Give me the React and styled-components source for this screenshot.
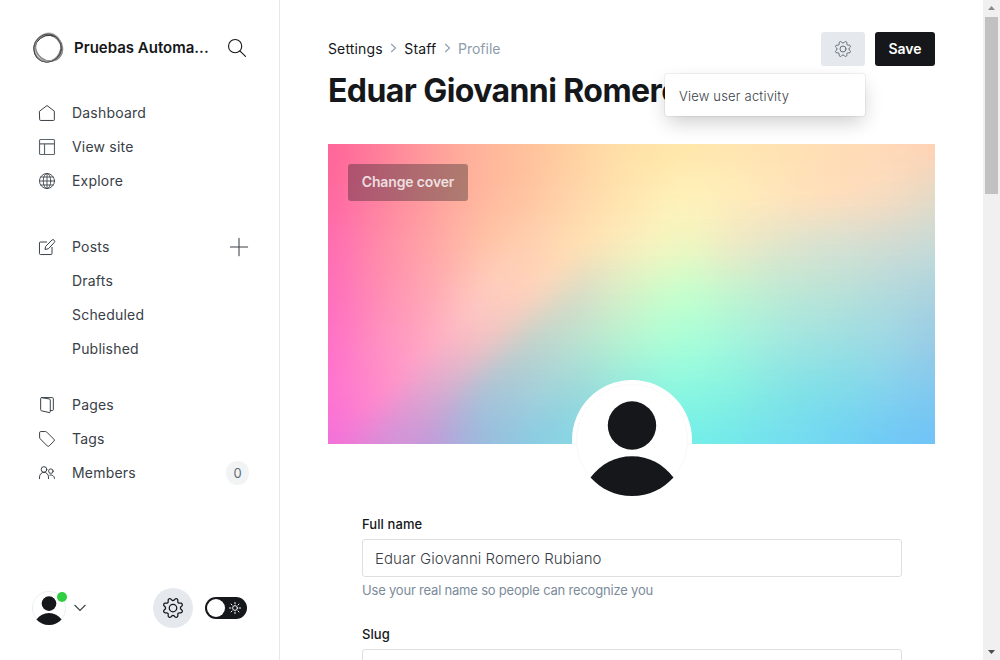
import React from "react";
import styled, { createGlobalStyle, css } from "styled-components";

const ink = "#15171a";
const slate = "#394047";

const Global = createGlobalStyle`
  * { box-sizing: border-box; }
  html, body { margin: 0; height: 660px; overflow: hidden; background: #fff; }
  body { font-family: Inter, "Liberation Sans", sans-serif; color: ${ink}; }
  #root { height: 660px; }
  button, input { font-family: inherit; }
`;

const Shell = styled.div`
  display: flex;
  width: 1000px;
  height: 660px;
  overflow: hidden;
`;

const Sidebar = styled.nav`
  flex: none;
  width: 280px;
  display: flex;
  flex-direction: column;
  border-right: 1px solid #e5e7ea;
`;

const SiteHead = styled.header`
  height: 96px;
  padding: 0 33px 0 32px;
  display: flex;
  align-items: center;
`;

const SiteName = styled.div`
  flex: 1;
  margin-left: 10px;
  font-size: 15px;
  font-weight: 600;
  line-height: 20px;
  white-space: nowrap;
`;

const NavGroup = styled.ul`
  list-style: none;
  margin: 0 0 ${(p) => p.$gap}px;
  padding: 0 31px 0 39px;
`;

const NavItem = styled.li`
  display: flex;
  align-items: center;
  height: 34px;
  color: ${slate};
  font-size: 14px;
  font-weight: 370;
  letter-spacing: 0.2px;
  padding-left: ${(p) => (p.$nested ? "33px" : "0")};
  > svg:first-child { margin-right: 17px; }
  > span { flex: 1; padding-bottom: 2px; }
`;

const Count = styled.b`
  width: 23px;
  height: 24px;
  margin-right: -1px;
  padding-bottom: 1px;
  border-radius: 12px;
  background: #f1f3f4;
  display: grid;
  place-items: center;
  font-size: 13px;
  font-weight: 400;
  letter-spacing: 0;
  color: #626d79;
`;

const SideFoot = styled.footer`
  margin-top: auto;
  height: 104px;
  padding: 0 32px;
  display: flex;
  align-items: center;
`;

const UserAvatar = styled.div`
  position: relative;
  width: 34px;
  height: 34px;
  margin-right: 8px;
  svg { display: block; }
`;

const OnlineDot = styled.i`
  position: absolute;
  top: 1px;
  right: -1px;
  width: 10px;
  height: 10px;
  border-radius: 50%;
  background: #30cf43;
`;

const RoundButton = styled.button`
  width: 40px;
  height: 40px;
  margin: 0 12px 0 auto;
  padding: 0;
  border: 0;
  border-radius: 50%;
  background: #e5e9ed;
  display: grid;
  place-items: center;
`;

const Toggle = styled.div`
  width: 42px;
  height: 22px;
  border-radius: 11px;
  background: ${ink};
  display: flex;
  align-items: center;
  justify-content: space-between;
  padding: 0 6px 0 2px;
`;

const Knob = styled.i`
  width: 18px;
  height: 18px;
  border-radius: 50%;
  background: #fff;
`;

const Main = styled.main`
  flex: 1;
  min-width: 0;
  padding: 32px 48px 0;
`;

const PageHead = styled.header`
  display: flex;
  justify-content: space-between;
  align-items: flex-start;
  height: 112px;
`;

const Crumbs = styled.div`
  display: flex;
  align-items: center;
  height: 18px;
  margin-top: 7px;
  gap: 7.3px;
  font-size: 14px;
  letter-spacing: 0.14px;
  color: ${ink};
`;

const Current = styled.span`
  letter-spacing: 0;
  color: #8e9cac;
`;

const Title = styled.h1`
  margin: 12px 0 0;
  max-width: 400px;
  font-size: 32px;
  line-height: 43px;
  font-weight: 700;
  letter-spacing: -0.58px;
  white-space: nowrap;
`;

const Actions = styled.div`
  position: relative;
  display: flex;
  gap: 10px;
`;

const Button = styled.button`
  height: 34px;
  border: 0;
  border-radius: 3px;
  padding: 0;
  display: grid;
  place-items: center;
  font-size: 14px;
  font-weight: 600;
  ${(p) =>
    p.$primary
      ? css`width: 60px; padding-bottom: 1px; background: ${ink}; color: #fff;`
      : css`width: 44px; background: #e5e9ed; color: #626d79;`}
`;

const Menu = styled.div`
  position: absolute;
  top: 42px;
  right: 70px;
  width: 200px;
  height: 42px;
  padding: 1px 14px 0;
  display: flex;
  align-items: center;
  border-radius: 3px;
  background: #fff;
  box-shadow: 0 0 0 1px rgba(0, 0, 0, 0.05), 0 8px 20px -2px rgba(0, 0, 0, 0.2);
  font-size: 13px;
  font-weight: 360;
  letter-spacing: 0.2px;
  color: ${slate};
`;

const Cover = styled.section`
  position: relative;
  height: 300px;
  display: flex;
  flex-direction: column;
  align-items: flex-start;
  padding: 20px;
  isolation: isolate;
`;

const Band = styled.div`
  position: absolute;
  inset: 0;
  z-index: -1;
  background: linear-gradient(90deg, ${(p) => p.$stops});
  ${(p) =>
    p.$from !== null &&
    css`mask-image: linear-gradient(180deg, transparent ${p.$from}px, #000 ${p.$to}px);`}
`;

const CoverButton = styled.button`
  flex: none;
  width: 120px;
  height: 37px;
  padding: 0 0 2px;
  border: 0;
  border-radius: 3px;
  background: rgba(21, 23, 26, 0.34);
  color: rgba(255, 255, 255, 0.8);
  font-size: 14px;
  font-weight: 600;
  letter-spacing: -0.15px;
`;

const Portrait = styled.div`
  flex: none;
  width: 120px;
  height: 120px;
  margin: 179px auto 0;
  border-radius: 50%;
  background: #fff;
  padding: 4px;
  svg { display: block; }
`;

const Form = styled.form`
  padding: 70px 33px 0 34px;
`;

const Field = styled.div`
  height: 110px;
`;

const Label = styled.label`
  display: block;
  height: 25px;
  line-height: 20px;
  font-size: 13px;
  font-weight: 450;
  letter-spacing: 0.1px;
`;

const Input = styled.input`
  display: block;
  width: 100%;
  height: 38px;
  border: 1px solid #dddfe1;
  border-radius: 3px;
  padding: 0 12px;
  outline: 0;
  font-size: 15px;
  font-weight: 360;
  letter-spacing: 0.06px;
  color: ${slate};
  background: #fff;
`;

const Hint = styled.p`
  margin: 4px 0 0;
  line-height: 19px;
  font-size: 13px;
  letter-spacing: -0.2px;
  color: #7c8b9a;
`;

const Scrollbar = styled.aside`
  flex: none;
  width: 17px;
  background: #f0f0f0;
  display: flex;
  flex-direction: column;
  align-items: center;
  justify-content: space-between;
`;

const ScrollTop = styled.div`
  display: flex;
  flex-direction: column;
`;

const Thumb = styled.div`
  width: 13px;
  height: 177px;
  margin: 0 auto;
  background: #c1c1c1;
`;

const Icon = ({ size = 16, sw = 1.5, color = slate, box = 24, children }) => (
  <svg width={size} height={size} viewBox={`0 0 ${box} ${box}`} fill="none" stroke={color} strokeWidth={sw} strokeLinecap="round" strokeLinejoin="round" overflow="visible">
    {children}
  </svg>
);

const Gear = ({ size, sw, color }) => (
  <Icon size={size} sw={sw} color={color}>
    <path d="M10.546 2.438a1.957 1.957 0 0 0 2.908 0L14.4 1.4a1.959 1.959 0 0 1 3.41 1.413l-.071 1.4a1.958 1.958 0 0 0 2.051 2.054l1.4-.071a1.959 1.959 0 0 1 1.41 3.41l-1.042.94a1.96 1.96 0 0 0 0 2.909l1.042.94a1.959 1.959 0 0 1-1.413 3.41l-1.4-.071a1.958 1.958 0 0 0-2.056 2.056l.071 1.4A1.959 1.959 0 0 1 14.4 22.6l-.941-1.041a1.959 1.959 0 0 0-2.908 0L9.606 22.6A1.959 1.959 0 0 1 6.2 21.192l.072-1.4a1.958 1.958 0 0 0-2.056-2.056l-1.4.071A1.958 1.958 0 0 1 1.4 14.4l1.041-.94a1.96 1.96 0 0 0 0-2.909L1.4 9.606A1.958 1.958 0 0 1 2.809 6.2l1.4.071a1.958 1.958 0 0 0 2.058-2.06L6.2 2.81A1.959 1.959 0 0 1 9.606 1.4z" />
    <circle cx="12" cy="12" r="4.5" />
  </Icon>
);

const Logo = () => (
  <svg width="32" height="32" viewBox="0 0 32 32" fill="none">
    <ellipse cx="15.6" cy="16.4" rx="13.6" ry="13.3" stroke="#555" strokeWidth="1.5" />
    <ellipse cx="16.7" cy="15.3" rx="14" ry="12.6" stroke="#8a8a8a" strokeWidth="1.6" transform="rotate(38 16 16)" />
    <ellipse cx="15.7" cy="16.4" rx="14.4" ry="12.6" stroke="#333" strokeWidth=".9" transform="rotate(-38 16 16)" />
    <ellipse cx="16.5" cy="15.5" rx="14.3" ry="12.9" stroke="#aaa" strokeWidth="1.4" transform="rotate(-65 16 16)" />
    <ellipse cx="15.6" cy="16.3" rx="13.4" ry="14.3" stroke="#444" strokeWidth=".8" transform="rotate(25 16 16)" />
  </svg>
);

const Person = ({ size }) => (
  <svg width={size} height={size} viewBox="0 0 112 112">
    <circle cx="56" cy="56" r={size < 50 ? 54.5 : 55.5} fill="#fff" stroke={size < 50 ? "#e9ebed" : "#f5f5f6"} strokeWidth={size < 50 ? 3 : 0.7} />
    <circle cx="56" cy="41.5" r="24.2" fill={ink} />
    <path d="M14.5 93.5C25 80 39 72.3 56 72.3S87 80 97.5 93.5C87 105 73 112 56 112S25 105 14.5 93.5z" fill={ink} />
  </svg>
);

const icons = {
  home: <Icon><path d="M1 9.2 12 .8l11 8.4V22a1.2 1.2 0 0 1-1.2 1.2H2.2A1.2 1.2 0 0 1 1 22z" /></Icon>,
  site: <Icon color="#5c636b" sw={1.7}><rect x=".8" y=".8" width="22.4" height="22.4" rx="1.6" /><path d="M.8 7.3h22.4M8.3 7.3v16" /></Icon>,
  globe: <Icon sw={1.3}><circle cx="12" cy="12" r="11.3" /><ellipse cx="12" cy="12" rx="5.6" ry="11.3" /><path d="M.8 12h22.4M2.8 6h18.4M2.8 18h18.4M12 .8v22.4" /></Icon>,
  edit: <Icon><path d="M19.5 12.5v9.3a1.5 1.5 0 0 1-1.5 1.5H2.2a1.5 1.5 0 0 1-1.5-1.5V6a1.5 1.5 0 0 1 1.5-1.5h9.3" /><path d="m13.5 14.8-4.5.9.9-4.6 9.5-9.5a2.1 2.1 0 0 1 3 0l.6.6a2.1 2.1 0 0 1 0 3z" /></Icon>,
  pages: <Icon><path d="M5.5.9h14.4A1.6 1.6 0 0 1 21.5 2.5v16.2a1.6 1.6 0 0 1-1.6 1.6h-2.9" /><path d="M4 .9 15.5 3a1.6 1.6 0 0 1 1.4 1.6V22a1.3 1.3 0 0 1-1.6 1.3L3.8 20.7a1.6 1.6 0 0 1-1.3-1.6V2.3A1.4 1.4 0 0 1 4 .9h2" /></Icon>,
  tag: <Icon><path d="M.9 2.3A1.5 1.5 0 0 1 2.4.8h7.2a3 3 0 0 1 2.1.9l10.7 10.7a2 2 0 0 1 0 2.8l-7.2 7.2a2 2 0 0 1-2.8 0L1.8 11.7a3 3 0 0 1-.9-2.1z" /></Icon>,
  members: <Icon><circle cx="7.5" cy="6.7" r="4.2" /><path d="M.8 20.5v-2.7a6.7 6.7 0 0 1 13.4 0v2.7" /><circle cx="17.8" cy="9.2" r="3.4" /><path d="M16.2 15.1a5.3 5.3 0 0 1 7 5v.4" /></Icon>,
};

const groups = [
  { gap: 32, items: [["home", "Dashboard"], ["site", "View site"], ["globe", "Explore"]] },
  { gap: 22, items: [["edit", "Posts"], [null, "Drafts"], [null, "Scheduled"], [null, "Published"]] },
  { gap: 0, items: [["pages", "Pages"], ["tag", "Tags"], ["members", "Members"]] },
];

// Colour mesh of the cover: one row per 50px of height, one column per 1/12 of the width.
const mesh = [
  "ff6699,ff7f9a,ff9c9c,ffb49b,ffc29c,ffd3a2,ffe1a8,ffe6aa,ffe5b0,ffe2b2,ffddb5,ffdab8,ffd3b5",
  "ff69a0,ff829f,ff9d9d,ffb69e,ffc6a2,ffd7aa,ffe6b0,fff0b8,ffecba,ffe4bb,fedebc,f6dcc0,e6dac5",
  "ff6eb0,ff8aa9,ffa5a7,ffc0a8,ffd0b0,ffe0b4,f7eebd,eff6c0,ecebc5,e0e5cb,d8e1d0,d2dcd2,c8dad6",
  "ff70bc,ff8cb4,ffa8b5,ffc8be,fad2bd,dadec6,d4f2c8,c6fecd,c2f4d0,bde9d5,b9e2d8,b3dbdc,acd3de",
  "ff72c8,ff8fc2,ffaac4,eec0c5,c2d2cc,b8e2d1,b2f4d3,a8fdd8,a2f5dc,a0e8e0,9ce0e2,9bd8e5,98cce6",
  "ff74d0,ff8bcc,dda6d0,b0c0d6,a4ceda,9adadb,90ebdf,8af6e1,86f0e2,82e4e6,80dcea,82d2ee,80c8f0",
  "f272d8,da8cd8,c29cd9,9cbadd,8ccbe2,86d8e6,7ce4e6,74ede8,74e8ea,74dff0,72d5f2,70cbf5,70c4f7",
].map((row) => row.split(",").map((hex) => [0, 2, 4].map((i) => parseInt(hex.slice(i, i + 2), 16))));

// Height at which the warm tones turn cool, per column; blending follows this slope.
const ridge = [290, 256, 224, 190, 157, 127, 103, 86, 72, 59, 48, 36, 23];

const spline = (a, b, c, d, t) =>
  b + 0.5 * t * (c - a + t * (2 * a - 5 * b + 4 * c - d + t * (3 * (b - c) + d - a)));

const clamp = (v, lo, hi) => Math.min(hi, Math.max(lo, v));

const columnColour = (col, y) => {
  const v = clamp(y / 50, 0, 6);
  const r = Math.min(5, Math.floor(v));
  const at = (i) => mesh[clamp(i, 0, 6)][col];
  return [0, 1, 2].map((k) => spline(at(r - 1)[k], at(r)[k], at(r + 1)[k], at(r + 2)[k], v - r));
};

const coverColour = (u, y) => {
  const c = Math.min(11, Math.floor(u));
  const t = u - c;
  const level = y - (ridge[c] * (1 - t) + ridge[c + 1] * t);
  const at = (i) => columnColour(clamp(i, 0, 12), level + ridge[clamp(i, 0, 12)]);
  const [p, q, r, s] = [at(c - 1), at(c), at(c + 1), at(c + 2)];
  const rgb = [0, 1, 2].map((k) => Math.round(clamp(spline(p[k], q[k], r[k], s[k], t), 0, 255)));
  return `rgb(${rgb.join(",")})`;
};

const step = 12.5;
const bands = Array.from({ length: 25 }, (_, row) =>
  Array.from({ length: 37 }, (_, i) => coverColour(i / 3, row * step)).join(",")
);

const CrumbArrow = () => (
  <svg width="7" height="10" viewBox="0 0 7 10" fill="none" stroke="#8e9cac" strokeWidth="1.1"><path d="m1.2 1 4.3 4-4.3 4" /></svg>
);

const ScrollArrow = ({ up }) => (
  <svg width="17" height="17" viewBox="0 0 17 17"><path d={up ? "M5 10h7L8.5 6z" : "M5 7h7l-3.5 4z"} fill={up ? "#8a8a8a" : "#4d4d4d"} /></svg>
);

export default function App() {
  return (
    <Shell>
      <Global />
      <Sidebar>
        <SiteHead>
          <Logo />
          <SiteName>Pruebas Automa...</SiteName>
          <Icon size={18} color={ink} sw={1.5}><circle cx="9.5" cy="9.5" r="8.8" /><path d="m15.8 15.8 7.5 7.5" /></Icon>
        </SiteHead>
        {groups.map(({ gap, items }, i) => (
          <NavGroup key={i} $gap={gap}>
            {items.map(([icon, name]) => (
              <NavItem key={name} $nested={!icon}>
                {icon && icons[icon]}
                <span>{name}</span>
                {name === "Posts" && <Icon size={18} sw={1.4}><path d="M12 .5v23M.5 12h23" /></Icon>}
                {name === "Members" && <Count>0</Count>}
              </NavItem>
            ))}
          </NavGroup>
        ))}
        <SideFoot>
          <UserAvatar><Person size={34} /><OnlineDot /></UserAvatar>
          <svg width="12" height="8" viewBox="0 0 12 8" fill="none" stroke={slate} strokeWidth="1.1"><path d="m.6 1 5.4 5.5L11.4 1" /></svg>
          <RoundButton><Gear size={20} sw={1.5} color={ink} /></RoundButton>
          <Toggle>
            <Knob />
            <Icon size={12} color="#fff" sw={1.9}>
              <circle cx="12" cy="12" r="4.8" />
              <path d="M12 .8v3M12 20.2v3M.8 12h3M20.2 12h3M4.1 4.1l2 2M17.9 17.9l2 2M19.9 4.1l-2 2M6.1 17.9l-2 2" />
            </Icon>
          </Toggle>
        </SideFoot>
      </Sidebar>
      <Main>
        <PageHead>
          <div>
            <Crumbs>
              <span>Settings</span><CrumbArrow /><span>Staff</span><CrumbArrow /><Current>Profile</Current>
            </Crumbs>
            <Title>Eduar Giovanni Romero</Title>
          </div>
          <Actions>
            <Button><Gear size={16} sw={1.5} color="#626d79" /></Button>
            <Button $primary>Save</Button>
            <Menu>View user activity</Menu>
          </Actions>
        </PageHead>
        <Cover>
          {bands.map((stops, row) => (
            <Band key={row} $stops={stops} $from={row ? (row - 1) * step : null} $to={row * step} />
          ))}
          <CoverButton>Change cover</CoverButton>
          <Portrait><Person size={112} /></Portrait>
        </Cover>
        <Form>
          <Field>
            <Label>Full name</Label>
            <Input readOnly value="Eduar Giovanni Romero Rubiano" />
            <Hint>Use your real name so people can recognize you</Hint>
          </Field>
          <Field>
            <Label>Slug</Label>
            <Input readOnly value="" />
          </Field>
        </Form>
      </Main>
      <Scrollbar>
        <ScrollTop><ScrollArrow up /><Thumb /></ScrollTop>
        <ScrollArrow />
      </Scrollbar>
    </Shell>
  );
}
